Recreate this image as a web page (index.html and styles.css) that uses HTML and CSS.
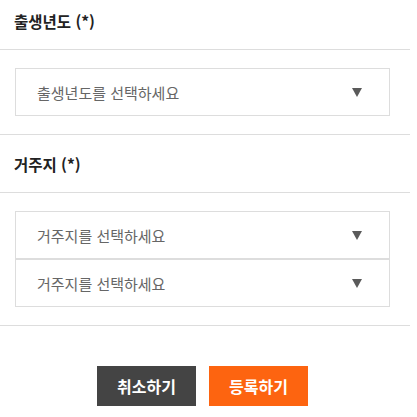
FILE: index.html
```html
<!DOCTYPE html>
<html lang="ko">
<head>
<meta charset="utf-8">
<link rel="stylesheet" href="styles.css">
</head>
<body>
<div class="page">
  <section class="section">
    <h2 class="section-title">출생년도 (*)</h2>
    <div class="section-body">
      <div class="select">
        <span class="select-text">출생년도를 선택하세요</span>
        <svg class="arrow" width="10" height="9" viewBox="0 0 10 9"><polygon points="0,0 10,0 5,9" fill="#5a5a5a"/></svg>
      </div>
    </div>
  </section>
  <section class="section">
    <h2 class="section-title">거주지 (*)</h2>
    <div class="section-body">
      <div class="select">
        <span class="select-text">거주지를 선택하세요</span>
        <svg class="arrow" width="10" height="9" viewBox="0 0 10 9"><polygon points="0,0 10,0 5,9" fill="#5a5a5a"/></svg>
      </div>
      <div class="select">
        <span class="select-text">거주지를 선택하세요</span>
        <svg class="arrow" width="10" height="9" viewBox="0 0 10 9"><polygon points="0,0 10,0 5,9" fill="#5a5a5a"/></svg>
      </div>
    </div>
  </section>
  <div class="actions">
    <button class="btn btn-cancel">취소하기</button>
    <button class="btn btn-submit">등록하기</button>
  </div>
</div>
</body>
</html>
```
FILE: styles.css
```css
* { box-sizing: border-box; }
html, body { margin: 0; padding: 0; background: #fff; }
body {
  font-family: "Noto Sans CJK KR", "Noto Sans", sans-serif;
  color: #222;
}
.page {
  width: 410px;
  margin-top: -8px;
}
.section { border-bottom: 1px solid #ddd; }
.section-title {
  margin: 0;
  height: 58px;
  padding-left: 14px;
  display: flex;
  align-items: center;
  font-size: 15.5px;
  font-weight: 700;
  color: #222;
  border-bottom: 1px solid #ddd;
}
.section-body {
  padding: 18px 20px 18px 15px;
}
.select {
  height: 48px;
  border: 1px solid #ddd;
  display: flex;
  align-items: center;
  justify-content: space-between;
  padding: 0 27px 0 21px;
}
.select-text {
  font-size: 15px;
  color: #666;
}
.arrow { display: block; margin-top: 1px; }
.actions {
  display: flex;
  justify-content: center;
  gap: 13px;
  padding: 40px 5px 0 0;
}
.btn {
  width: 99px;
  height: 40px;
  border: none;
  font-family: "Noto Sans CJK KR", "Noto Sans", sans-serif;
  font-size: 16px;
  font-weight: 700;
  color: #fff;
  padding: 0;
}
.btn-cancel { background: #444444; }
.btn-submit { background: #fd6410; }
```
